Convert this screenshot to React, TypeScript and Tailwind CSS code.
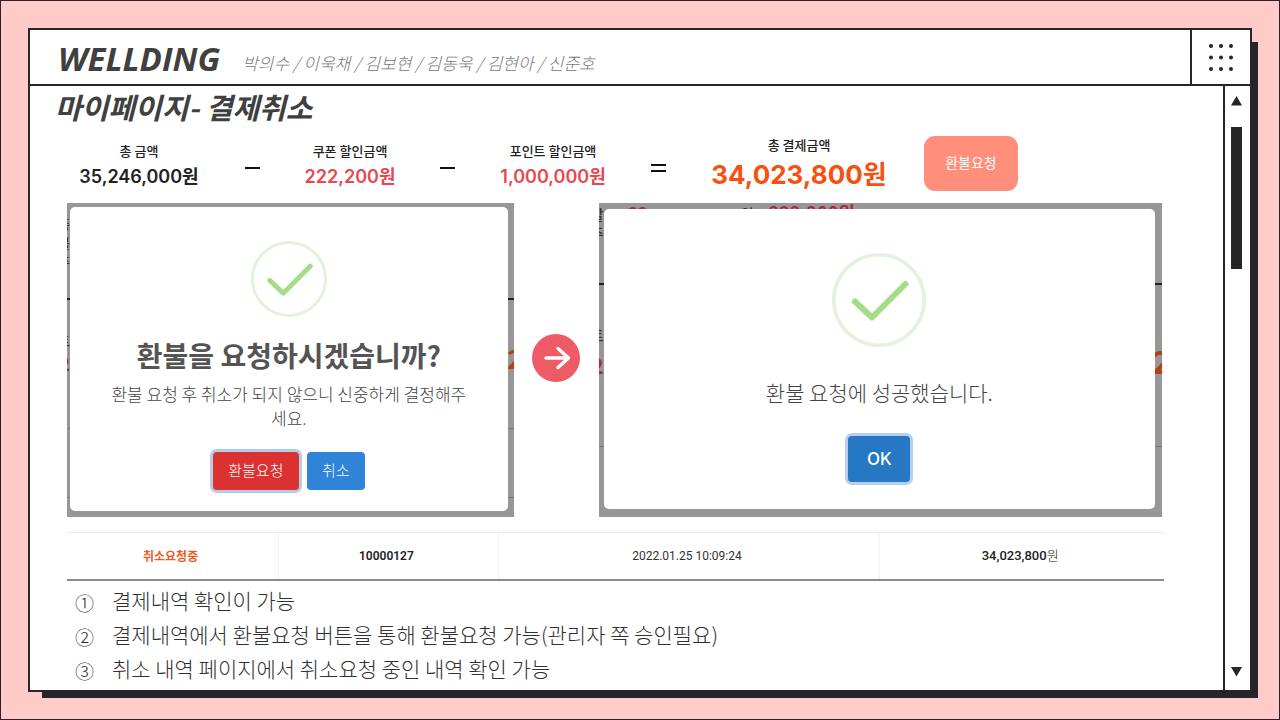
import type { ReactNode } from 'react';

const kr = "font-['Noto_Sans_CJK_KR','Noto_Sans',sans-serif]";
const num = "font-['Inter','Noto_Sans_CJK_KR',sans-serif]";
const rob = "font-['Roboto','Noto_Sans_CJK_KR',sans-serif]";

function CheckMark({ className }: { className: string }) {
  return (
    <svg viewBox="0 0 94 94" fill="none" className={className} aria-hidden="true">
      <circle cx="47" cy="47" r="45.2" stroke="#e3f3da" strokeWidth="3.6" />
      <path d="M23 48.5 40 64.5 73.5 31" stroke="#a5dc86" strokeWidth="6" strokeLinecap="round" strokeLinejoin="round" />
    </svg>
  );
}

function Amount({ label, value, tone, width }: { label: string; value: string; tone: string; width: string }) {
  return (
    <div className={`flex shrink-0 flex-col items-center whitespace-nowrap ${width}`}>
      <span className="text-[13px] leading-6 font-medium text-[#222]">{label}</span>
      <span className={`${num} ${tone}`}>{value}</span>
    </div>
  );
}

function Operator({ lines }: { lines: 1 | 2 }) {
  return (
    <svg width="15" height="12" viewBox="0 0 15 12" className="mt-1.5 shrink-0" role="img" aria-label={lines === 1 ? '빼기' : '합계'}>
      {lines === 1 ? <path d="M0 6h15" stroke="#111" strokeWidth="2" /> : <path d="M0 3h15M0 9h15" stroke="#111" strokeWidth="2" />}
    </svg>
  );
}

function Shot({ behind, frame, grow, children }: { behind: ReactNode; frame: string; grow: string; children: ReactNode }) {
  return (
    <section className={`relative flex min-h-[314px] basis-0 overflow-hidden bg-[#979797] ${grow} ${frame}`}>
      <div aria-hidden="true" className="absolute inset-0 leading-none font-medium whitespace-nowrap text-[#333]">{behind}</div>
      <div className="relative flex flex-1 flex-col items-center rounded-[5px] bg-white">{children}</div>
    </section>
  );
}

const notes = [
  ['①', '결제내역 확인이 가능'],
  ['②', '결제내역에서 환불요청 버튼을 통해 환불요청 가능(관리자 쪽 승인필요)'],
  ['③', '취소 내역 페이지에서 취소요청 중인 내역 확인 가능'],
];

export default function App() {
  return (
    <div className={`flex min-h-screen flex-col border border-[#2b2022] bg-[#ffcaca] p-[27px] ${kr}`}>
      <div className="flex flex-1 flex-col border-2 border-[#262626] bg-white shadow-[10px_10px_0_-4px_#262626]">
        <header className="flex h-14 items-stretch border-b-2 border-[#262626]">
          <div className="flex flex-1 items-center gap-[22px] pl-[28px]">
            <h1 className="pt-[3px] font-['Open_Sans',sans-serif] text-[33px] leading-10 font-bold text-[#404040] italic">WELLDING</h1>
            <p className="pt-3 text-[17px] leading-6 font-light whitespace-nowrap text-[#7d7777] italic">
              박의수 / 이욱채 / 김보현 / 김동욱 / 김현아 / 신준호
            </p>
          </div>
          <button type="button" aria-label="메뉴" className="flex w-[60px] items-center justify-center border-l-2 border-[#262626]">
            <svg width="26" height="28" viewBox="0 0 26 28" fill="#262626">
              {[3, 14.5, 26].map((y) => [3, 13, 23].map((x) => <circle key={`${x}-${y}`} cx={x} cy={y} r="2" />))}
            </svg>
          </button>
        </header>

        <div className="flex flex-1">
          <main className="min-w-0 flex-1 pr-[59px] pl-[37px]">
            <h2 className="-ml-3 pb-1 text-[29px] leading-10 font-bold text-[#404040] italic">마이페이지- 결제취소</h2>

            <div className="flex h-[66px] items-center gap-[45px] pt-1 pl-[11px]">
              <Amount label="총 금액" value="35,246,000원" tone="text-[18px] leading-7 font-semibold text-[#222]" width="w-[122px]" />
              <Operator lines={1} />
              <Amount label="쿠폰 할인금액" value="222,200원" tone="text-[18px] leading-7 font-semibold text-[#e8484f]" width="w-[90px]" />
              <Operator lines={1} />
              <Amount label="포인트 할인금액" value="1,000,000원" tone="text-[18px] leading-7 font-semibold text-[#e8484f]" width="w-[106px]" />
              <Operator lines={2} />
              <div className="-mr-2 -mt-1">
                <Amount label="총 결제금액" value="34,023,800원" tone="text-[26px] leading-9 font-bold text-[#f9500f]" width="w-[176px]" />
              </div>
              <button type="button" className="mb-1 h-[55px] w-[94px] shrink-0 rounded-[11px] bg-[#ff8f7a] pb-0.5 text-[14px] text-white">
                환불요청
              </button>
            </div>

            <div className="mt-[7px] mr-0.5 flex items-stretch">
              <Shot
                grow="grow-[447]"
                frame="pt-1 pr-1.5 pb-1.5 pl-[3px]"
                behind={
                  <>
                    <span className="absolute top-[14px] -left-[9px] text-[13px]">총</span>
                    <span className="absolute top-[33px] -left-[9px] text-[13px]">불</span>
                    <span className="absolute top-[51px] -left-[9px] text-[13px]">추</span>
                    <hr className="absolute inset-x-0 top-[95px] border-t-2 border-[#222]" />
                    <span className="absolute top-[131px] -left-[9px] text-[13px]">트</span>
                    <span className="absolute top-[150px] -left-[8px] text-[19px] font-bold text-[#b02634]">2</span>
                    <span className="absolute top-[142px] -right-[9px] text-[26px] font-bold text-[#b8400e]">2</span>
                    <hr className="absolute inset-x-0 top-[225px] border-[#777]" />
                    <hr className="absolute inset-x-0 top-[294px] border-[#777]" />
                  </>
                }
              >
                <CheckMark className="mt-[34px] size-[76px]" />
                <h3 className="mt-[18px] text-[28px] leading-10 font-bold text-[#545454]">환불을 요청하시겠습니까?</h3>
                <p className="mt-[7px] text-center text-[17px] leading-6 font-light text-[#444]">
                  환불 요청 후 취소가 되지 않으니 신중하게 결정해주
                  <br />
                  세요.
                </p>
                <div className="mt-[22px] flex gap-2">
                  <button type="button" className="h-[38px] w-[86px] rounded-[4px] bg-[#dc3131] pb-0.5 text-[15px] font-light text-white ring-3 ring-[#b5cbe8]">
                    환불요청
                  </button>
                  <button type="button" className="h-[38px] w-[58px] rounded-[4px] bg-[#2f84d7] pb-0.5 text-[15px] font-light text-white">취소</button>
                </div>
              </Shot>

              <div className="flex w-[85px] shrink-0 items-center justify-center pb-1">
                <svg width="48" height="48" viewBox="0 0 48 48" fill="none" role="img" aria-label="다음 단계">
                  <circle cx="24" cy="24" r="24" fill="#ee5a66" />
                  <path d="M14 24H36.500M26 14.500 36.500 24 26 33.500" stroke="#fff" strokeWidth="3.400" strokeLinecap="round" strokeLinejoin="round" />
                </svg>
              </div>

              <Shot
                grow="grow-[563]"
                frame="pt-1.5 pr-[7px] pb-2 pl-[5px]"
                behind={
                  <>
                    <span className="absolute top-1 -left-[8px] text-[14px]">할</span>
                    <span className="absolute top-[22px] -left-[8px] text-[14px]">추</span>
                    <span className="absolute top-px left-[30px] text-[16px] font-bold text-[#b02634]">22</span>
                    <span className="absolute top-[3px] left-[142px] text-[14px]">인</span>
                    <span className="absolute top-0 left-[170px] text-[18px] font-bold text-[#b02634]">222,200원</span>
                    <hr className="absolute inset-x-0 top-[80px] border-t-2 border-[#222]" />
                    <span className="absolute top-[125px] -left-[8px] text-[14px]">트</span>
                    <span className="absolute top-[150px] -left-[8px] text-[22px] font-bold text-[#b02634]">2</span>
                    <span className="absolute top-[141px] -right-[9px] text-[32px] font-bold text-[#b8400e]">2</span>
                    <hr className="absolute inset-x-0 top-[243px] border-[#777]" />
                  </>
                }
              >
                <CheckMark className="mt-[44px] size-[94px]" />
                <p className="mt-[29px] text-[21px] leading-8 font-light text-[#444]">환불 요청에 성공했습니다.</p>
                <button type="button" className={`mt-7 h-[46px] w-[62px] rounded-[4px] bg-[#2778c4] pt-0.5 text-[17px] font-medium text-white ring-3 ring-[#b5cfec] ${num}`}>
                  OK
                </button>
              </Shot>
            </div>

            <table className="mt-[15px] w-full table-fixed border-collapse border-t border-b-2 border-t-[#e9e9e9] border-b-[#8a8a8a] text-center">
              <colgroup>
                <col className="w-[19.3%]" />
                <col className="w-[20%]" />
                <col className="w-[34.8%]" />
                <col className="w-[25.9%]" />
              </colgroup>
              <tbody>
                <tr className="h-[47px]">
                  <td className="border-r border-[#f3f3f3] pr-1 text-[12px] font-bold text-[#ef5a24]">취소요청중</td>
                  <td className={`border-r border-[#f3f3f3] pr-1 text-[12px] font-semibold text-[#222] ${rob}`}>10000127</td>
                  <td className={`border-r border-[#f3f3f3] pr-1 text-[12px] text-[#333] ${rob}`}>2022.01.25 10:09:24</td>
                  <td className={`pr-1 text-[13px] text-[#222] ${rob}`}>
                    <span className="font-medium">34,023,800</span><span className="font-light">원</span>
                  </td>
                </tr>
              </tbody>
            </table>

            <ol className="mt-0.5 pl-2 text-[#303030]">
              {notes.map(([mark, text]) => (
                <li key={mark} className="flex h-[34px] items-center">
                  <span className="w-[37px] shrink-0 pt-1.5 text-[19px] leading-6 font-light">{mark}</span>
                  <span className="text-[21px] leading-8 font-light">{text}</span>
                </li>
              ))}
            </ol>
          </main>

          <div className="flex w-[27px] shrink-0 flex-col items-center border-l-2 border-[#262626] pt-[10px] pr-0.5 pb-[13px]">
            <button type="button" aria-label="위로" className="mb-[21px]">
              <svg width="11" height="10" viewBox="0 0 11 10" className="block"><path d="M5.500 0 11 9.500H0z" fill="#262626" /></svg>
            </button>
            <div className="h-[142px] w-[11px] bg-[#262626]" />
            <button type="button" aria-label="아래로" className="mt-auto">
              <svg width="11" height="10" viewBox="0 0 11 10" className="block"><path d="M0 0h11L5.500 9.500z" fill="#262626" /></svg>
            </button>
          </div>
        </div>
      </div>
    </div>
  );
}
